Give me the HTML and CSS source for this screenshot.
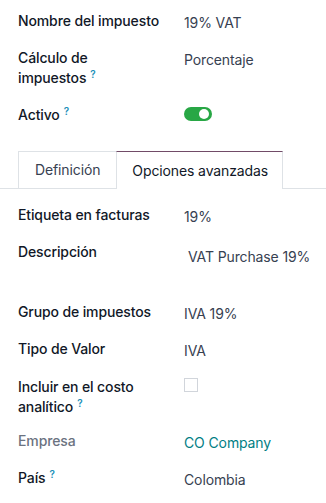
FILE: index.html
```html
<!DOCTYPE html>
<html lang="es">
<head>
<meta charset="utf-8">
<link rel="stylesheet" href="styles.css">
</head>
<body>
<div class="sheet">
  <div class="group top">
    <div class="row">
      <div class="label">Nombre del impuesto</div>
      <div class="value">19% VAT</div>
    </div>
    <div class="row">
      <div class="label">Cálculo de impuestos<sup class="help">?</sup></div>
      <div class="value">Porcentaje</div>
    </div>
    <div class="row">
      <div class="label">Activo<sup class="help">?</sup></div>
      <div class="value"><span class="toggle"><span class="knob"></span></span></div>
    </div>
  </div>

  <div class="tabs">
    <div class="tab">Definición</div>
    <div class="tab active">Opciones avanzadas</div>
  </div>

  <div class="group bottom">
    <div class="row">
      <div class="label">Etiqueta en facturas</div>
      <div class="value">19%</div>
    </div>
    <div class="row tall">
      <div class="label">Descripción</div>
      <div class="value textarea">VAT Purchase 19%</div>
    </div>
    <div class="row">
      <div class="label">Grupo de impuestos</div>
      <div class="value">IVA 19%</div>
    </div>
    <div class="row">
      <div class="label">Tipo de Valor</div>
      <div class="value">IVA</div>
    </div>
    <div class="row tight">
      <div class="label">Incluir en el costo analítico<sup class="help">?</sup></div>
      <div class="value"><span class="checkbox"></span></div>
    </div>
    <div class="row">
      <div class="label muted">Empresa</div>
      <div class="value link">CO Company</div>
    </div>
    <div class="row">
      <div class="label">País<sup class="help">?</sup></div>
      <div class="value">Colombia</div>
    </div>
  </div>
</div>
</body>
</html>
```
FILE: styles.css
```css
html, body {
  margin: 0;
  padding: 0;
  background: #fff;
}
body {
  font-family: Inter, "Noto Sans", "Liberation Sans", sans-serif;
  font-size: 14px;
  line-height: 20px;
  letter-spacing: -0.12px;
  color: #374151;
}
.sheet {
  padding-top: 11px;
}
.group {
  display: flex;
  flex-direction: column;
  gap: 17px;
  padding: 0 18px;
}
.group.bottom {
  padding-top: 16px;
}
.row {
  display: grid;
  grid-template-columns: 166px 1fr;
  align-items: start;
}
.row.tall {
  min-height: 43px;
}
.row.tight {
  margin-top: 1px;
  margin-bottom: -3px;
}
.label {
  color: #111827;
  font-weight: 500;
  width: 130px;
}
.label.muted {
  color: #6b7280;
}
.row:first-child .label,
.group.bottom .label {
  width: 160px;
}
.value {
  padding-top: 2px;
  margin-bottom: -2px;
  white-space: nowrap;
}
.value.textarea {
  padding-top: 5px;
  padding-left: 4px;
}
.value.link {
  color: #017e84;
}
.help {
  display: inline-block;
  height: 0;
  vertical-align: top;
  color: #1a8fb8;
  font-size: 10px;
  font-weight: 600;
  line-height: 12px;
  margin-left: 4px;
}
.toggle {
  display: inline-block;
  width: 28px;
  height: 14px;
  border-radius: 7px;
  background: #28a745;
  position: relative;
  vertical-align: top;
}
.knob {
  position: absolute;
  right: 3px;
  top: 2px;
  width: 10px;
  height: 10px;
  border-radius: 50%;
  background: #fff;
}
.checkbox {
  display: inline-block;
  width: 12px;
  height: 12px;
  border: 1px solid #d1d5db;
  vertical-align: top;
  margin-top: -1px;
}
.tabs {
  display: flex;
  align-items: flex-end;
  margin-top: 25px;
  padding-left: 18px;
  border-bottom: 1px solid #dee2e6;
  height: 38px;
}
.tab {
  height: 37px;
  box-sizing: border-box;
  line-height: 36px;
  border: 1px solid #dee2e6;
  border-bottom: none;
  padding: 0 16px;
  color: #374151;
  background: #fff;
}
.tab:first-child {
  border-right: none;
}
.tab.active {
  height: 38px;
  margin-bottom: -1px;
  padding: 0 14px 0 15px;
  border-top-color: #714b67;
  color: #111827;
  line-height: 38px;
}
```
